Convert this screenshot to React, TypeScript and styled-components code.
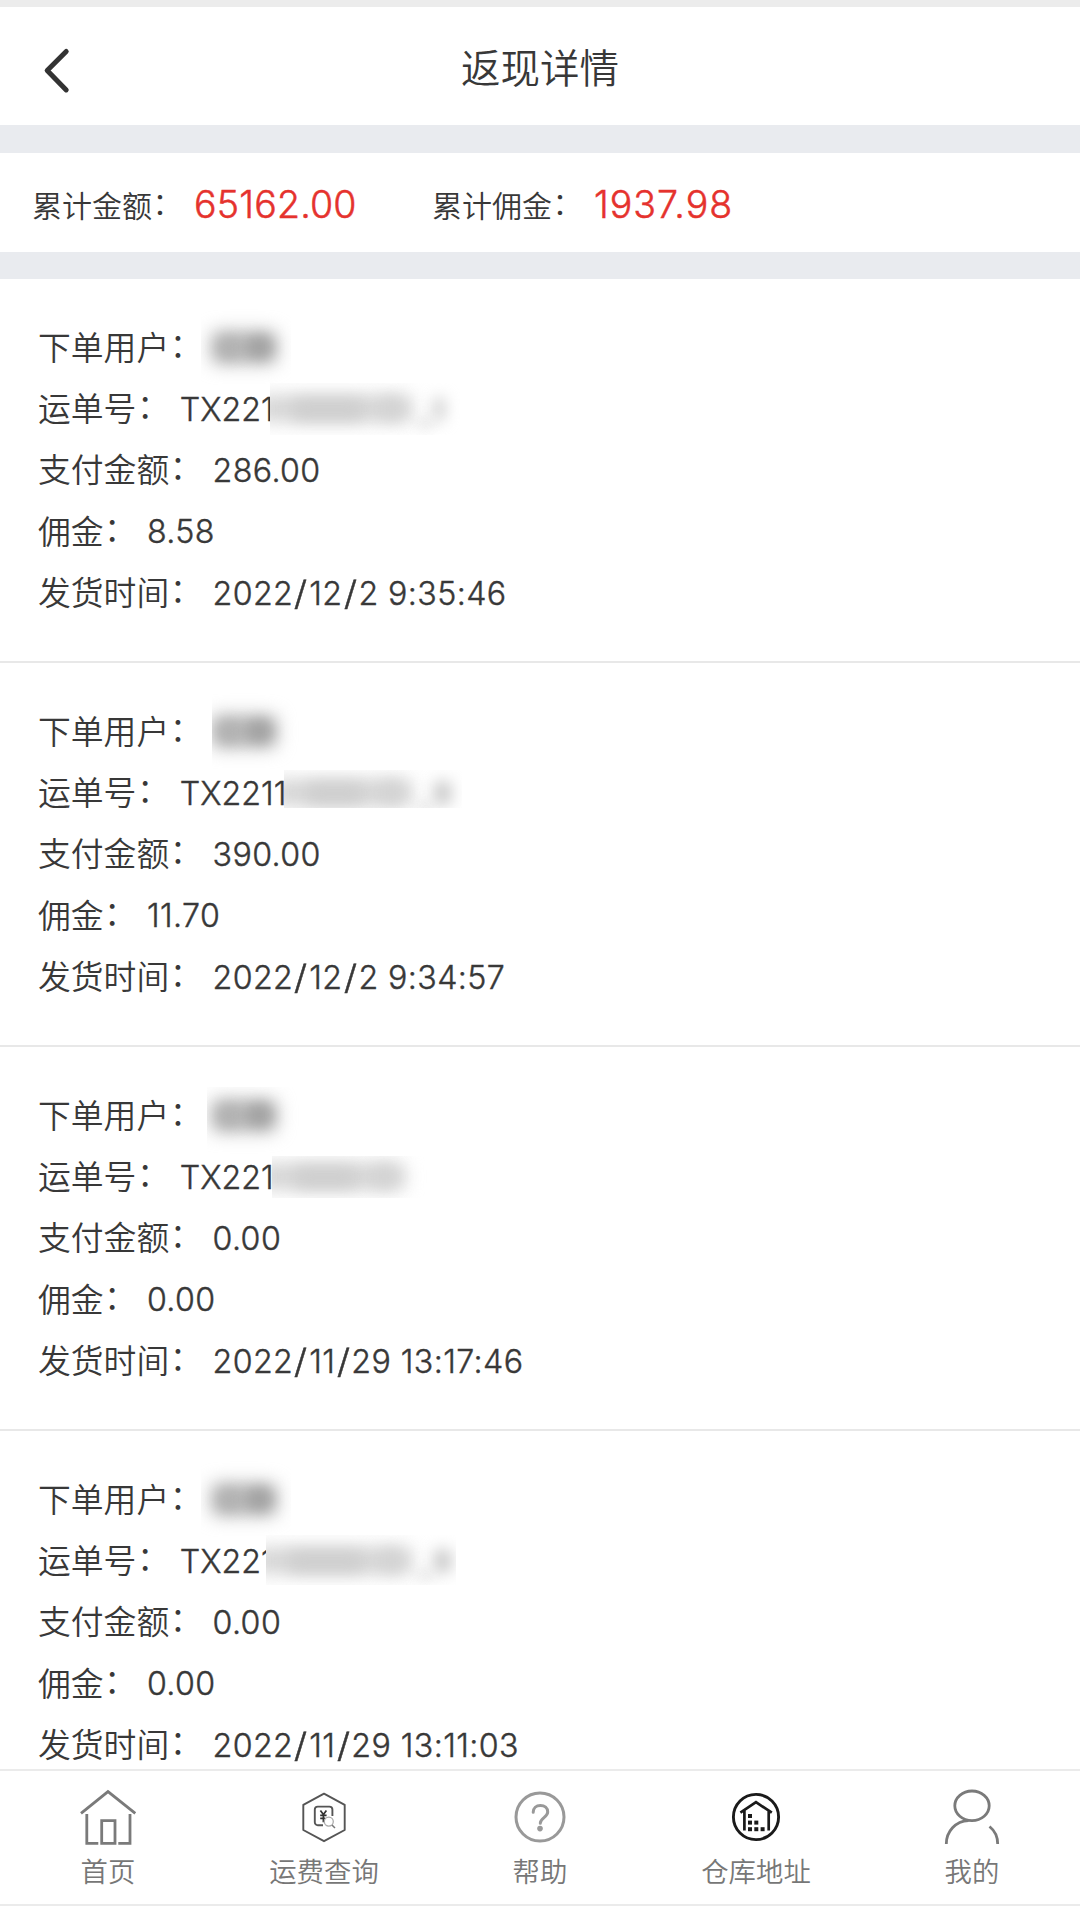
import React from 'react';
import styled, { createGlobalStyle } from 'styled-components';

const GlobalStyle = createGlobalStyle`
  * { box-sizing: border-box; }
  body {
    margin: 0;
    background: #fff;
    color: #383838;
    font-family: Inter, "Noto Sans CJK SC", sans-serif;
    font-feature-settings: "calt" 0;
  }
`;

const cjk = '"Noto Sans CJK SC", sans-serif';

const Page = styled.div`
  display: flex;
  flex-direction: column;
  width: 1080px;
  height: 1906px;
  overflow: hidden;
  background: #fff;
`;

const StatusEdge = styled.div`
  flex: none;
  height: 7px;
  background: #ececec;
`;

const Header = styled.header`
  flex: none;
  display: grid;
  grid-template-columns: 120px 1fr 120px;
  align-items: center;
  height: 118px;
`;

const BackButton = styled.button`
  display: flex;
  padding: 9px 0 0 40px;
  border: 0;
  background: none;
`;

const Title = styled.h1`
  margin: 0;
  padding-bottom: 1px;
  font: 350 39.5px/58px ${cjk};
  text-align: center;
`;

const Band = styled.div<{ $height: number }>`
  flex: none;
  height: ${(p) => p.$height}px;
  background: #e9ebef;
`;

const Summary = styled.section`
  flex: none;
  display: flex;
  align-items: center;
  height: 99px;
  padding-left: 32px;
`;

const SummaryItem = styled.div<{ $width: number }>`
  display: flex;
  align-items: center;
  width: ${(p) => p.$width}px;
`;

const SummaryLabel = styled.span`
  width: 162px;
  padding-top: 3px;
  font: 350 30px/44px ${cjk};
  white-space: nowrap;
`;

const SummaryValue = styled.span<{ $spacing: number }>`
  padding-top: 4px;
  font-size: 37.5px;
  font-weight: 300;
  line-height: 46px;
  letter-spacing: ${(p) => p.$spacing}px;
  color: #e5322d;
  -webkit-text-stroke: 0.5px #e5322d;
`;

const Colon = styled.span`
  display: inline-block;
  transform: translate(0.5px, -3.5px);
`;

const List = styled.main`
  flex: 1;
  min-height: 0;
  overflow: hidden;
`;

const Order = styled.article`
  height: 384px;
  padding: 37px 0 0 38px;
  border-bottom: 2px solid #e8e8e8;
`;

const Row = styled.div`
  display: flex;
  align-items: center;
  height: 61.4px;
`;

const Label = styled.span`
  padding-bottom: 2px;
  font: 350 32.8px/48px ${cjk};
  white-space: nowrap;
`;

const Value = styled.span<{ $width?: number }>`
  margin-left: 10.5px;
  padding-top: 3px;
  width: ${(p) => (p.$width ? `${p.$width}px` : 'auto')};
  font-size: 32.2px;
  font-weight: 300;
  line-height: 44px;
  letter-spacing: ${(p) => (p.$width ? 0 : 0.4)}px;
  white-space: pre;
  -webkit-text-stroke: 0.4px #383838;
`;

const Slash = styled.span`
  display: inline-block;
  margin: 0 2.2px;
  transform: scale(1.2, 1.04);
`;

const Mask = styled.span<{ $width: number; $height: number; $shift: number; $gap: number }>`
  flex: none;
  position: relative;
  top: ${(p) => p.$shift}px;
  width: ${(p) => p.$width}px;
  height: ${(p) => p.$height}px;
  margin-left: ${(p) => p.$gap}px;
  overflow: hidden;
  background: #fff;
`;

const Smudge = styled.i<{ $x: number; $y: number; $w: number; $h: number; $tone: string; $soft: number }>`
  position: absolute;
  left: ${(p) => p.$x}px;
  top: ${(p) => p.$y}px;
  width: ${(p) => p.$w}px;
  height: ${(p) => p.$h}px;
  border-radius: 6px;
  background: ${(p) => p.$tone};
  filter: blur(${(p) => p.$soft}px);
`;

const TabBar = styled.nav`
  flex: none;
  display: grid;
  grid-template-columns: repeat(5, 1fr);
  height: 137px;
  border-top: 2px solid #ebebeb;
  border-bottom: 2px solid #ebebeb;
  background: #fff;
`;

const Tab = styled.a`
  display: flex;
  flex-direction: column;
  align-items: center;
  padding-top: 15px;
  color: #777;
`;

const TabLabel = styled.span`
  font: 350 27.4px/40px ${cjk};
`;

const Icon = styled.svg`
  display: block;
  width: 64px;
  height: 64px;
  fill: none;
  stroke: #7a7a7a;
  stroke-width: 2.8;
`;

const HomeIcon = () => (
  <Icon viewBox="0 0 64 64">
    <path d="M5 27.3 32 5.6 59.3 27.3M10.8 28v29.4h11.5M42.3 57.4H54V28M25.7 57.4V34.7H39v22.7z" />
  </Icon>
);

const FreightIcon = () => (
  <Icon viewBox="0 0 64 64" strokeLinejoin="round">
    <g stroke="#555" strokeWidth="1.9">
      <path d="M32 7.6 52.7 18.8V44L32 55.2 11.3 44V18.8z" />
      <path d="M40.4 30v-6.4a3 3 0 0 0-3-3H25.8a3 3 0 0 0-3 3v12.6a3 3 0 0 0 3 3H31" />
    </g>
    <path d="m28.4 24.6 3 4 3-4M31.4 28.6v7.6M28.2 29.4h6.4M28.2 32.4h5" stroke="#333" strokeWidth="1.7" />
    <circle cx="36.8" cy="35.6" r="4.5" fill="#fff" stroke="#aaa" strokeWidth="1.3" />
    <path d="m40 39 3 3" stroke="#777" strokeWidth="1.5" />
  </Icon>
);

const HelpIcon = () => (
  <Icon viewBox="0 0 64 64" strokeLinecap="round">
    <g stroke="#999" strokeWidth="3">
      <circle cx="32" cy="31" r="24" />
      <path d="M25.2 26.2c0-4 3-6.8 7.2-6.8s7.3 2.6 7.3 6.6c0 5.2-7.4 6-7.4 11.2" />
    </g>
    <circle cx="32" cy="42.6" r="2.8" fill="#999" stroke="none" />
  </Icon>
);

const WAREHOUSE_BOXES = [
  [26, 30], [26, 36.6], [32.3, 36.6], [26, 43.2], [32.3, 43.2], [38.6, 43.2],
];

const WarehouseIcon = () => (
  <Icon viewBox="0 0 64 64">
    <g stroke="#1a1a1a" strokeWidth="2.9">
      <circle cx="32" cy="31" r="22.6" />
      <path d="M16.4 26.7 32 16.2 47.8 26.7M20.4 24.5v20M44.7 24.5v20" strokeWidth="2.7" />
    </g>
    {WAREHOUSE_BOXES.map(([x, y]) => (
      <rect key={`${x}-${y}`} x={x - 2} y={y - 2} width="4" height="4" fill="#1a1a1a" stroke="none" />
    ))}
  </Icon>
);

const UserIcon = () => (
  <Icon viewBox="0 0 64 64">
    <ellipse cx="32" cy="19.8" rx="17.2" ry="14.8" />
    <path d="M6.3 58C6.3 45.5 15.5 35 28.5 34.6M49.5 40.5C54.5 44.5 57.7 50.5 57.7 58" />
  </Icon>
);

type MaskBox = { width: number; height: number; shift: number; gap?: number };

type OrderData = {
  name: MaskBox;
  code: string;
  codeWidth: number;
  mask: MaskBox;
  suffix: 'narrow' | 'wide' | 'none';
  amount: string;
  commission: string;
  time: string;
};

const ORDERS: OrderData[] = [
  {
    name: { width: 90, height: 76, shift: 0, gap: -1 },
    code: 'TX221', codeWidth: 90,
    mask: { width: 190, height: 52, shift: 1 }, suffix: 'narrow',
    amount: '286.00', commission: '8.58', time: '2022/12/2 9:35:46',
  },
  {
    name: { width: 90, height: 76, shift: 0, gap: 10 },
    code: 'TX2211', codeWidth: 104,
    mask: { width: 178, height: 38, shift: -3 }, suffix: 'wide',
    amount: '390.00', commission: '11.70', time: '2022/12/2 9:34:57',
  },
  {
    name: { width: 112, height: 68, shift: 6, gap: 5 },
    code: 'TX221', codeWidth: 92.5,
    mask: { width: 160, height: 42, shift: 1 }, suffix: 'none',
    amount: '0.00', commission: '0.00', time: '2022/11/29 13:17:46',
  },
  {
    name: { width: 90, height: 76, shift: 0, gap: -1 },
    code: 'TX221', codeWidth: 86.5,
    mask: { width: 190, height: 50, shift: 0 }, suffix: 'wide',
    amount: '0.00', commission: '0.00', time: '2022/11/29 13:11:03',
  },
];

const NameMask = ({ box }: { box: MaskBox }) => {
  const left = 11 - (box.gap ?? 0);
  const top = box.height / 2 - box.shift - 15;
  return (
    <Mask $width={box.width} $height={box.height} $shift={box.shift} $gap={box.gap ?? 0}>
      <Smudge $x={left - 2} $y={top - 1} $w={66} $h={33} $tone="#b8b8b8" $soft={9} />
      <Smudge $x={left + 6} $y={top + 6} $w={20} $h={19} $tone="#b0b0b0" $soft={7} />
      <Smudge $x={left + 34} $y={top + 5} $w={24} $h={20} $tone="#a0a0a0" $soft={7} />
    </Mask>
  );
};

const CodeMask = ({ order }: { order: OrderData }) => {
  const { mask, codeWidth, suffix } = order;
  const top = mask.height / 2 - mask.shift - 11;
  const end = (suffix === 'none' ? 225 : 232) - codeWidth;
  return (
    <Mask $width={mask.width} $height={mask.height} $shift={mask.shift} $gap={0}>
      <Smudge $x={-14} $y={top - 2} $w={end + 14} $h={27} $tone="#d6d6d6" $soft={9} />
      <Smudge $x={22} $y={top + 3} $w={end - 70} $h={19} $tone="#cdcdcd" $soft={8} />
      <Smudge $x={end - 34} $y={top + 2} $w={26} $h={19} $tone="#d2d2d2" $soft={8} />
      {suffix !== 'none' && (
        <>
          <Smudge $x={end + 5} $y={top + 24} $w={16} $h={5} $tone="#c8c8c8" $soft={7} />
          <Smudge
            $x={end + 22}
            $y={top}
            $w={suffix === 'wide' ? 17 : 10}
            $h={24}
            $tone="#c6c6c6"
            $soft={7.5}
          />
        </>
      )}
    </Mask>
  );
};

const TimeText = ({ text }: { text: string }) => (
  <>
    {text.split('/').map((part, i) => (
      <React.Fragment key={i}>
        {i > 0 && <Slash>/</Slash>}
        {part}
      </React.Fragment>
    ))}
  </>
);

const OrderCard = ({ order }: { order: OrderData }) => (
  <Order>
    <Row>
      <Label>下单用户<Colon>：</Colon></Label>
      <NameMask box={order.name} />
    </Row>
    <Row>
      <Label>运单号<Colon>：</Colon></Label>
      <Value $width={order.codeWidth}>{order.code}</Value>
      <CodeMask order={order} />
    </Row>
    <Row>
      <Label>支付金额<Colon>：</Colon></Label>
      <Value>{order.amount}</Value>
    </Row>
    <Row>
      <Label>佣金<Colon>：</Colon></Label>
      <Value>{order.commission}</Value>
    </Row>
    <Row>
      <Label>发货时间<Colon>：</Colon></Label>
      <Value><TimeText text={order.time} /></Value>
    </Row>
  </Order>
);

const TABS = [
  { label: '首页', Glyph: HomeIcon },
  { label: '运费查询', Glyph: FreightIcon },
  { label: '帮助', Glyph: HelpIcon },
  { label: '仓库地址', Glyph: WarehouseIcon },
  { label: '我的', Glyph: UserIcon },
];

export default function App() {
  return (
    <Page>
      <GlobalStyle />
      <StatusEdge />
      <Header>
        <BackButton>
          <svg width="32" height="48" viewBox="0 0 32 48" fill="none" stroke="#333" strokeWidth="5" strokeLinecap="round" strokeLinejoin="round">
            <path d="M26.2 4.5 7.2 23.5 26.2 42.9" />
          </svg>
        </BackButton>
        <Title>返现详情</Title>
      </Header>
      <Band $height={28} />
      <Summary>
        <SummaryItem $width={400}>
          <SummaryLabel>累计金额<Colon>：</Colon></SummaryLabel>
          <SummaryValue $spacing={0.2}>65162.00</SummaryValue>
        </SummaryItem>
        <SummaryItem $width={400}>
          <SummaryLabel>累计佣金<Colon>：</Colon></SummaryLabel>
          <SummaryValue $spacing={1}>1937.98</SummaryValue>
        </SummaryItem>
      </Summary>
      <Band $height={27} />
      <List>
        {ORDERS.map((order) => (
          <OrderCard key={order.time} order={order} />
        ))}
      </List>
      <TabBar>
        {TABS.map(({ label, Glyph }) => (
          <Tab key={label}>
            <Glyph />
            <TabLabel>{label}</TabLabel>
          </Tab>
        ))}
      </TabBar>
    </Page>
  );
}
